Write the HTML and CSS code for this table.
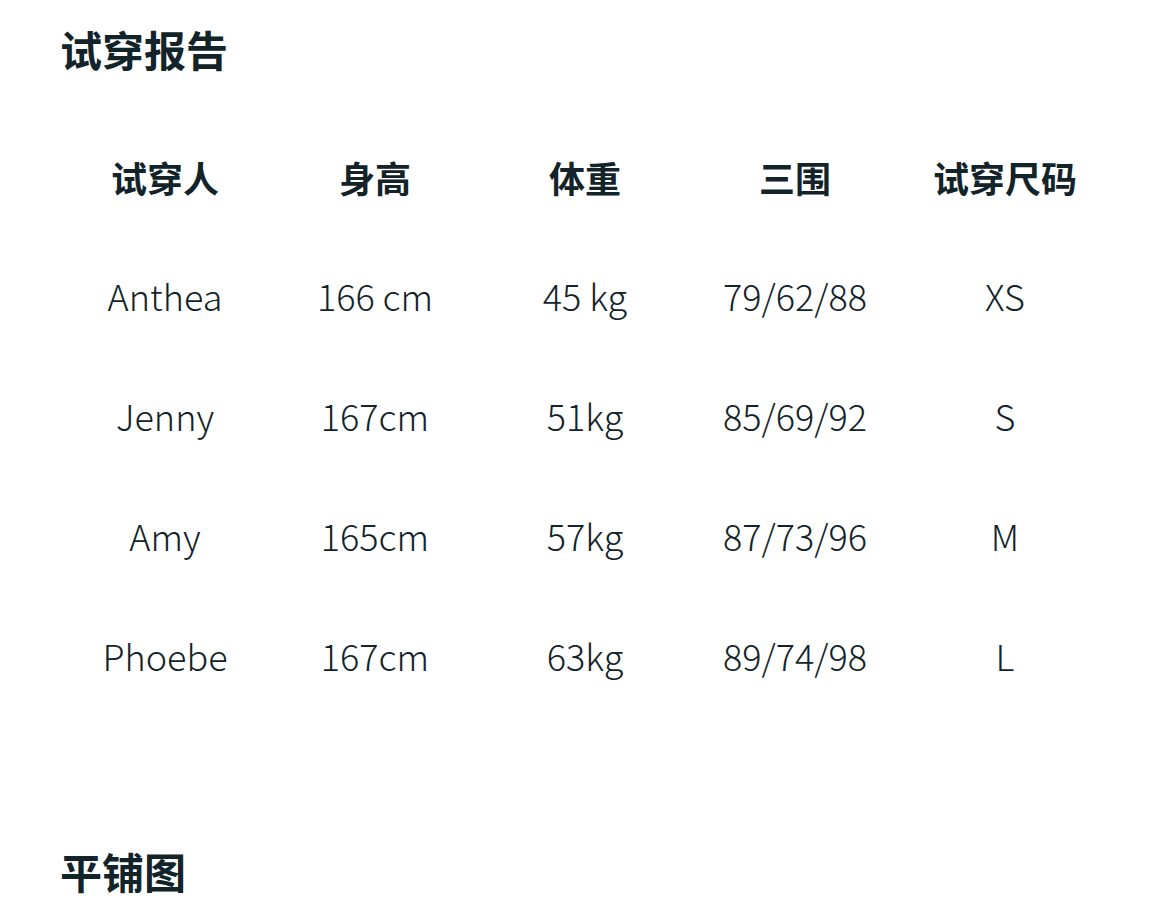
FILE: index.html
```html
<!DOCTYPE html>
<html lang="zh">
<head>
<meta charset="utf-8">
<link rel="stylesheet" href="styles.css">
</head>
<body>
<div class="page">
  <h2 class="title">试穿报告</h2>
  <div class="table">
    <div class="row head">
      <div class="cell">试穿人</div>
      <div class="cell">身高</div>
      <div class="cell">体重</div>
      <div class="cell">三围</div>
      <div class="cell">试穿尺码</div>
    </div>
    <div class="row">
      <div class="cell">Anthea</div>
      <div class="cell">166 cm</div>
      <div class="cell">45 kg</div>
      <div class="cell">79/62/88</div>
      <div class="cell">XS</div>
    </div>
    <div class="row">
      <div class="cell">Jenny</div>
      <div class="cell">167cm</div>
      <div class="cell">51kg</div>
      <div class="cell">85/69/92</div>
      <div class="cell">S</div>
    </div>
    <div class="row">
      <div class="cell">Amy</div>
      <div class="cell">165cm</div>
      <div class="cell">57kg</div>
      <div class="cell">87/73/96</div>
      <div class="cell">M</div>
    </div>
    <div class="row">
      <div class="cell">Phoebe</div>
      <div class="cell">167cm</div>
      <div class="cell">63kg</div>
      <div class="cell">89/74/98</div>
      <div class="cell">L</div>
    </div>
  </div>
  <h2 class="title second">平铺图</h2>
</div>
</body>
</html>
```

FILE: styles.css
```css
html, body {
  margin: 0;
  padding: 0;
  background: #ffffff;
}
body {
  font-family: "Noto Sans CJK SC", "Noto Sans", sans-serif;
  color: #122329;
}
.page {
  padding: 19px 60px 0 60px;
}
.title {
  margin: 0;
  font-size: 42px;
  line-height: 60px;
  font-weight: 700;
}
.table {
  margin-top: 38px;
  width: 1050px;
  display: flex;
  flex-direction: column;
}
.row {
  display: grid;
  grid-template-columns: repeat(5, 210px);
  height: 120px;
  align-items: center;
}
.cell {
  text-align: center;
  font-size: 36px;
  font-weight: 300;
  line-height: 50px;
}
.row.head .cell {
  font-size: 36px;
  font-weight: 700;
}
.row:not(.head) .cell {
  margin-top: -4px;
}
.second {
  margin-top: 124px;
}
```
